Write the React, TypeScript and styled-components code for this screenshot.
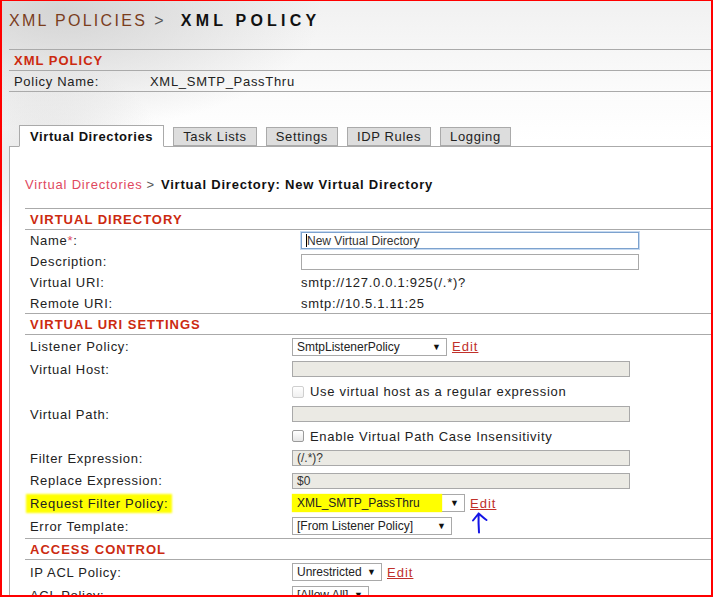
import React from 'react';
import styled, { createGlobalStyle } from 'styled-components';

const GlobalStyle = createGlobalStyle`
  html, body {
    margin: 0;
    padding: 0;
    background: #fff;
  }
  body {
    font-family: "Liberation Sans", Arial, sans-serif;
    color: #222;
  }
`;

const Frame = styled.div`
  box-sizing: border-box;
  width: 713px;
  height: 597px;
  overflow: hidden;
  position: relative;
  border: 2px solid #ff0000;
  border-top-width: 1px;
  background:
    radial-gradient(ellipse 120px 90px at 40px 150px, rgba(200, 200, 200, 0.45), rgba(255, 255, 255, 0) 100%),
    radial-gradient(ellipse 260px 120px at 60px 10px, rgba(205, 205, 205, 0.8), rgba(255, 255, 255, 0) 100%),
    linear-gradient(180deg, #f1f1f1 0px, #fbfbfb 90px, #ffffff 140px);
`;

const Title = styled.div`
  box-sizing: border-box;
  height: 48px;
  padding: 10px 0 0 7px;
  font-size: 16px;
  line-height: 20px;
  letter-spacing: 2.3px;
  white-space: nowrap;
`;

const TitleParent = styled.span`
  color: #7a3d1d;
`;

const TitleSep = styled.span`
  color: #555;
  margin: 0 15px 0 7px;
`;

const TitleCurrent = styled.span`
  font-weight: bold;
  color: #111;
  letter-spacing: 4.2px;
`;

const PolicyBox = styled.div`
  margin-left: 7px;
  border-top: 1px solid #aaa;
`;

const SectionHead = styled.div`
  box-sizing: border-box;
  height: ${p => p.$h ?? 21}px;
  padding-left: ${p => p.$pad ?? 5}px;
  padding-top: 1px;
  border-bottom: 1px solid #aaa;
  display: flex;
  align-items: center;
  color: #cc2a10;
  font-weight: bold;
  font-size: 13px;
  letter-spacing: 1px;
`;

const InfoRow = styled.div`
  box-sizing: border-box;
  height: 21px;
  padding-left: 5px;
  border-bottom: 1px solid #aaa;
  display: grid;
  grid-template-columns: 136px 1fr;
  align-items: center;
  font-size: 13px;
  letter-spacing: 0.7px;
`;

const TabBar = styled.div`
  display: flex;
  gap: 9px;
  margin: 33px 0 0 17px;
  align-items: flex-end;
  position: relative;
  z-index: 1;
`;

const Tab = styled.div`
  box-sizing: border-box;
  height: ${p => (p.$active ? 22 : 19)}px;
  padding: 0 ${p => (p.$active ? 10 : 9)}px;
  border: 1px solid #aaa;
  border-bottom: ${p => (p.$active ? '1px solid #fff' : '1px solid #aaa')};
  margin-bottom: ${p => (p.$active ? -1 : 0)}px;
  background: ${p => (p.$active ? '#fff' : '#ddd')};
  display: flex;
  align-items: center;
  font-size: 13px;
  letter-spacing: ${p => (p.$active ? 0.6 : 0.65)}px;
  font-weight: ${p => (p.$active ? 'bold' : 'normal')};
  color: ${p => (p.$active ? '#111' : '#222')};
`;

const Panel = styled.div`
  margin-left: 7px;
  border-left: 1px solid #aaa;
  border-top: 1px solid #aaa;
  background: #fff;
  padding: 0 0 0 15px;
`;

const Crumbs = styled.div`
  box-sizing: border-box;
  height: 61px;
  padding-top: 28px;
  font-size: 13px;
  line-height: 20px;
  letter-spacing: 0.8px;
  white-space: nowrap;
`;

const CrumbLink = styled.span`
  color: #e0485e;
`;

const CrumbSep = styled.span`
  color: #555;
  margin: 0 6px 0 4px;
`;

const CrumbCurrent = styled.span`
  font-weight: bold;
  color: #111;
`;

const Form = styled.div`
  border-top: 1px solid #aaa;
`;

const FormRow = styled.div`
  box-sizing: border-box;
  height: ${p => p.$h ?? 22}px;
  padding-left: 5px;
  display: grid;
  grid-template-columns: ${p => p.$col ?? 262}px 1fr;
  align-items: center;
  font-size: 13px;
  letter-spacing: 0.7px;
  border-bottom: ${p => (p.$last ? '1px solid #aaa' : 'none')};
`;

const Label = styled.span`
  justify-self: start;
  padding: 0 2px;
  margin-left: -2px;
  background: ${p => (p.$marked ? '#ffff00' : 'transparent')};
  box-shadow: ${p => (p.$marked ? '0 0 2px 2px #ffff00' : 'none')};
  line-height: 15px;
`;

const Req = styled.span`
  color: #e0485e;
`;

const Value = styled.div`
  display: flex;
  align-items: center;
  gap: 5px;
  position: relative;
`;

const TextBox = styled.div`
  box-sizing: border-box;
  width: 338px;
  height: ${p => (p.$focus ? 17 : 16)}px;
  border: 1px solid ${p => (p.$focus ? '#7da2ce' : '#a9a9a9')};
  box-shadow: ${p => (p.$focus ? '0 0 0 1px #c5d9f0' : 'none')};
  background: ${p => (p.$disabled ? '#ebeae4' : '#fff')};
  font-size: 12px;
  letter-spacing: 0;
  color: #333;
  padding-left: ${p => (p.$focus ? 5 : 4)}px;
  display: flex;
  align-items: center;
  white-space: nowrap;
`;

const Caret = styled.span`
  display: inline-block;
  width: 1px;
  height: 13px;
  background: #000;
  margin-left: -1px;
`;

const SelectBox = styled.div`
  box-sizing: border-box;
  width: ${p => p.$w}px;
  height: 18px;
  border: 1px solid #a9a9a9;
  background: #fff;
  font-size: 12px;
  letter-spacing: 0;
  color: #222;
  padding: 0 5px 0 4px;
  display: flex;
  align-items: center;
  justify-content: space-between;
  white-space: nowrap;
`;

const SelectText = styled.span`
  background: ${p => (p.$marked ? '#ffff00' : 'transparent')};
  box-shadow: ${p => (p.$marked ? '0 0 1px 2px #ffff00' : 'none')};
  padding-right: ${p => (p.$marked ? 20 : 0)}px;
  margin-left: ${p => (p.$marked ? -3 : 0)}px;
  padding-left: ${p => (p.$marked ? 3 : 0)}px;
`;

const Arrow = styled.span`
  font-size: 9px;
  color: #111;
`;

const EditLink = styled.a`
  color: #c0302a;
  text-decoration: underline;
  font-size: 13px;
  letter-spacing: 1px;
  cursor: pointer;
`;

const CheckLine = styled.label`
  display: flex;
  align-items: center;
  gap: 6px;
  color: #222;
`;

const CheckBox = styled.span`
  box-sizing: border-box;
  width: 12px;
  height: 12px;
  border-radius: 2px;
  border: 1px solid ${p => (p.$disabled ? '#cfcfcf' : '#9a9a9a')};
  background: linear-gradient(180deg, #ffffff, ${p => (p.$disabled ? '#f0f0f0' : '#e6e6e6')});
`;

const Annotation = styled.svg`
  position: absolute;
  left: 180px;
  top: 18px;
  overflow: visible;
`;

export default function App() {
  return (
    <>
      <GlobalStyle />
      <Frame>
        <Title>
          <TitleParent>XML POLICIES</TitleParent>
          <TitleSep>&gt;</TitleSep>
          <TitleCurrent>XML POLICY</TitleCurrent>
        </Title>

        <PolicyBox>
          <SectionHead $h={21} $pad={5}>XML POLICY</SectionHead>
          <InfoRow>
            <span>Policy Name:</span>
            <span>XML_SMTP_PassThru</span>
          </InfoRow>
        </PolicyBox>

        <TabBar>
          <Tab $active>Virtual Directories</Tab>
          <Tab>Task Lists</Tab>
          <Tab>Settings</Tab>
          <Tab>IDP Rules</Tab>
          <Tab>Logging</Tab>
        </TabBar>

        <Panel>
          <Crumbs>
            <CrumbLink>Virtual Directories</CrumbLink>
            <CrumbSep>&gt;</CrumbSep>
            <CrumbCurrent>Virtual Directory: New Virtual Directory</CrumbCurrent>
          </Crumbs>

          <Form>
            <SectionHead>VIRTUAL DIRECTORY</SectionHead>
            <FormRow $col={271} $h={21}>
              <Label>Name<Req>*</Req>:</Label>
              <Value>
                <TextBox $focus><Caret />New Virtual Directory</TextBox>
              </Value>
            </FormRow>
            <FormRow $col={271} $h={21}>
              <Label>Description:</Label>
              <Value>
                <TextBox />
              </Value>
            </FormRow>
            <FormRow $col={271} $h={21}>
              <Label>Virtual URI:</Label>
              <Value>smtp://127.0.0.1:925(/.*)?</Value>
            </FormRow>
            <FormRow $col={271} $h={21} $last>
              <Label>Remote URI:</Label>
              <Value>smtp://10.5.1.11:25</Value>
            </FormRow>

            <SectionHead>VIRTUAL URI SETTINGS</SectionHead>
            <FormRow $h={23}>
              <Label>Listener Policy:</Label>
              <Value>
                <SelectBox $w={155}>
                  <span>SmtpListenerPolicy</span>
                  <Arrow>▼</Arrow>
                </SelectBox>
                <EditLink>Edit</EditLink>
              </Value>
            </FormRow>
            <FormRow $h={22}>
              <Label>Virtual Host:</Label>
              <Value>
                <TextBox $disabled />
              </Value>
            </FormRow>
            <FormRow $h={23}>
              <span />
              <Value>
                <CheckLine>
                  <CheckBox $disabled />
                  Use virtual host as a regular expression
                </CheckLine>
              </Value>
            </FormRow>
            <FormRow $h={22}>
              <Label>Virtual Path:</Label>
              <Value>
                <TextBox $disabled />
              </Value>
            </FormRow>
            <FormRow $h={22}>
              <span />
              <Value>
                <CheckLine>
                  <CheckBox />
                  Enable Virtual Path Case Insensitivity
                </CheckLine>
              </Value>
            </FormRow>
            <FormRow $h={22}>
              <Label>Filter Expression:</Label>
              <Value>
                <TextBox $disabled>(/.*)?</TextBox>
              </Value>
            </FormRow>
            <FormRow $h={23}>
              <Label>Replace Expression:</Label>
              <Value>
                <TextBox $disabled>$0</TextBox>
              </Value>
            </FormRow>
            <FormRow $h={22}>
              <Label $marked>Request Filter Policy:</Label>
              <Value>
                <SelectBox $w={173}>
                  <SelectText $marked>XML_SMTP_PassThru</SelectText>
                  <Arrow>▼</Arrow>
                </SelectBox>
                <EditLink>Edit</EditLink>
                <Annotation width="16" height="21" viewBox="0 0 16 21">
                  <path
                    d="M7 20.5 C6.6 15 6.4 9 6.6 1.5 M1 8.5 C3 6 5 3.5 6.6 1.5 C9 3.5 12 6.5 14.5 8"
                    fill="none"
                    stroke="#1414e6"
                    strokeWidth="2"
                    strokeLinecap="round"
                    strokeLinejoin="round"
                  />
                </Annotation>
              </Value>
            </FormRow>
            <FormRow $h={25} $last>
              <Label>Error Template:</Label>
              <Value>
                <SelectBox $w={160}>
                  <span>[From Listener Policy]</span>
                  <Arrow>▼</Arrow>
                </SelectBox>
              </Value>
            </FormRow>

            <SectionHead>ACCESS CONTROL</SectionHead>
            <FormRow $h={24}>
              <Label>IP ACL Policy:</Label>
              <Value>
                <SelectBox $w={90}>
                  <span>Unrestricted</span>
                  <Arrow>▼</Arrow>
                </SelectBox>
                <EditLink>Edit</EditLink>
              </Value>
            </FormRow>
            <FormRow $h={22}>
              <Label>ACL Policy:</Label>
              <Value>
                <SelectBox $w={77}>
                  <span>[Allow All]</span>
                  <Arrow>▼</Arrow>
                </SelectBox>
              </Value>
            </FormRow>
          </Form>
        </Panel>
      </Frame>
    </>
  );
}
